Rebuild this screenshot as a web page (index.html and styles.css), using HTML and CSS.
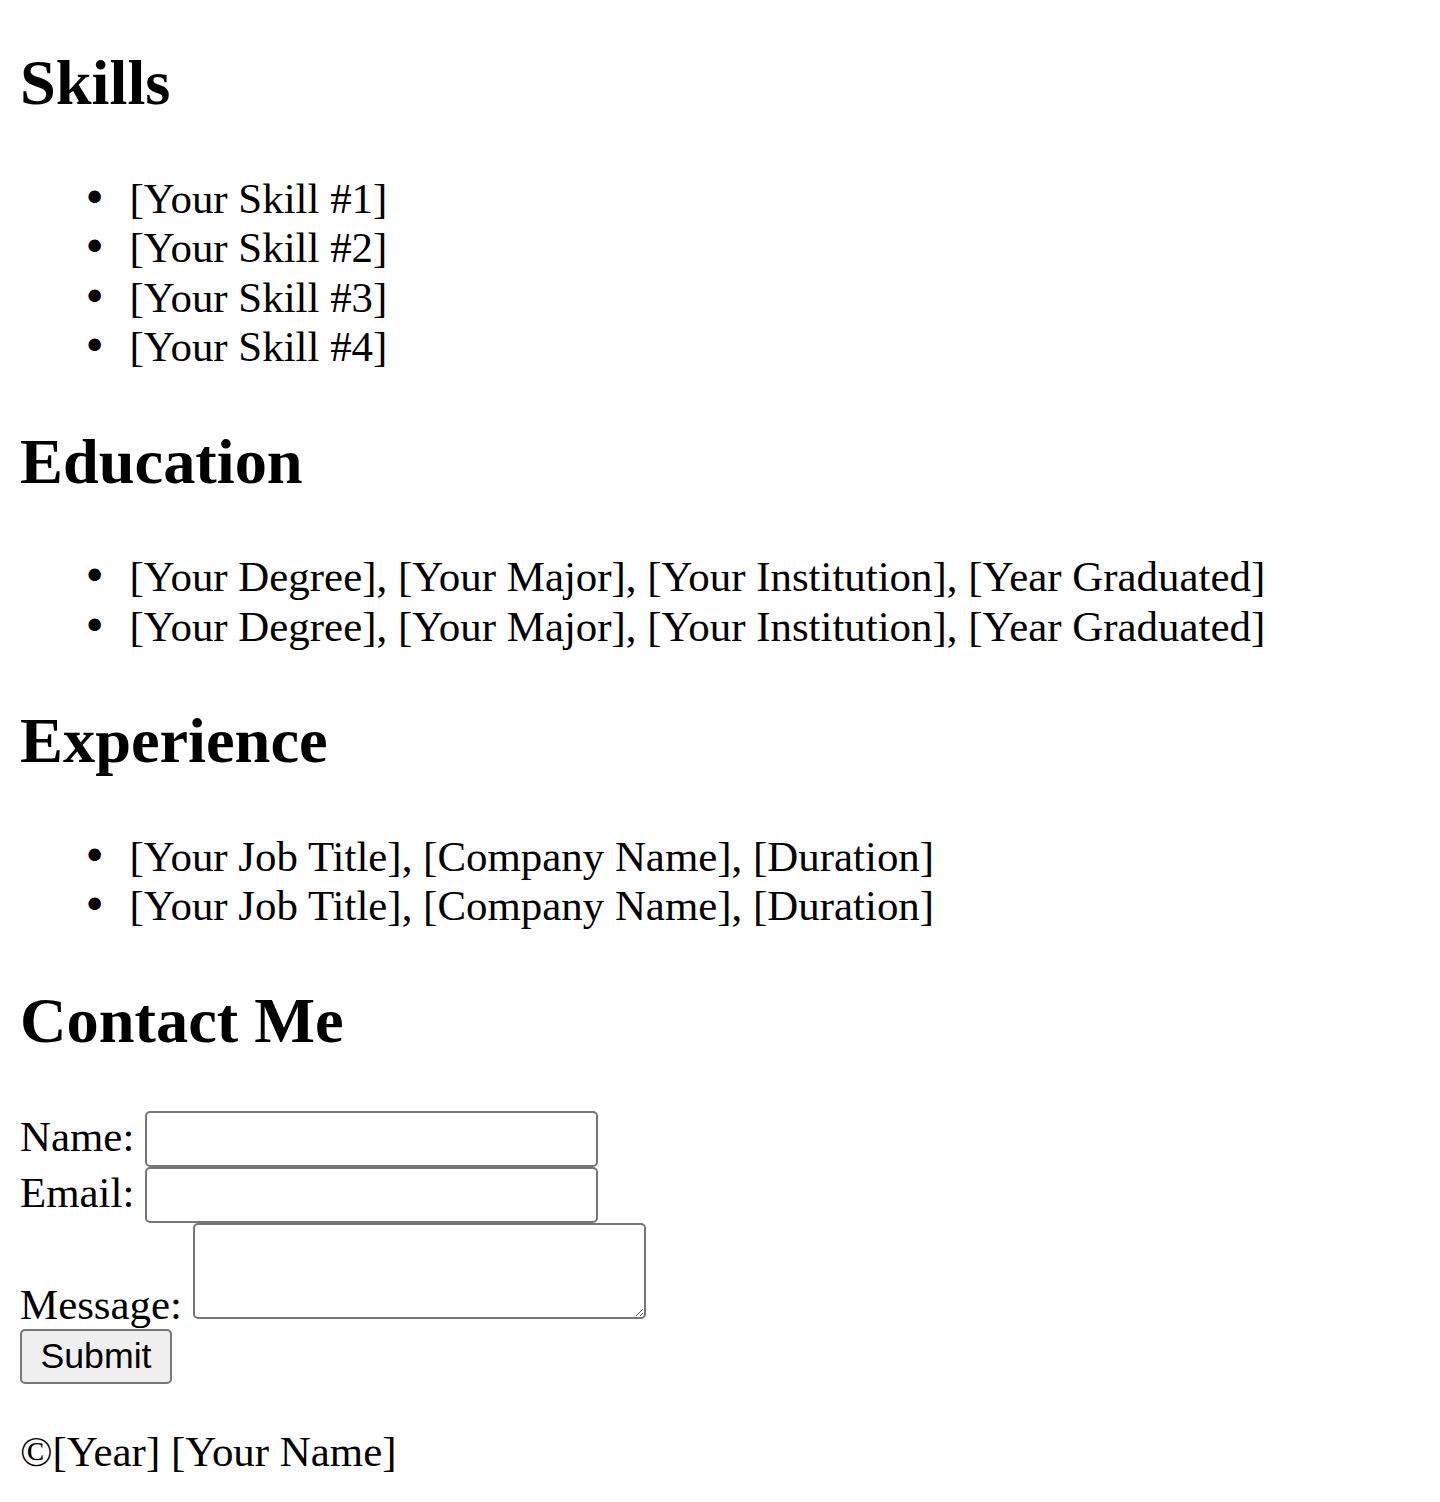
FILE: index.html
```html
<!DOCTYPE html>
<html lang="en">
<head>
<meta charset="utf-8">
<title>Resume</title>
<link rel="stylesheet" href="styles.css">
</head>
<body class="page">
<section class="section">
  <h2 class="heading heading--first">Skills</h2>
  <ul class="list">
    <li>[Your Skill #1]</li>
    <li>[Your Skill #2]</li>
    <li>[Your Skill #3]</li>
    <li>[Your Skill #4]</li>
  </ul>
</section>
<section class="section">
  <h2 class="heading">Education</h2>
  <ul class="list">
    <li>[Your Degree], [Your Major], [Your Institution], [Year Graduated]</li>
    <li>[Your Degree], [Your Major], [Your Institution], [Year Graduated]</li>
  </ul>
</section>
<section class="section">
  <h2 class="heading">Experience</h2>
  <ul class="list">
    <li>[Your Job Title], [Company Name], [Duration]</li>
    <li>[Your Job Title], [Company Name], [Duration]</li>
  </ul>
</section>
<section class="section">
  <h2 class="heading">Contact Me</h2>
  <form class="contact-form">
    <label for="name">Name:</label> <input class="field" type="text" id="name" name="name"><br>
    <label for="email">Email:</label> <input class="field" type="email" id="email" name="email"><br>
    <label for="message">Message:</label> <textarea class="field-area" id="message" name="message"></textarea><br>
    <button class="submit" type="submit">Submit</button>
  </form>
</section>
<footer class="footer">
  <p class="copyright">&copy;[Year] [Your Name]</p>
</footer>
</body>
</html>
```
FILE: styles.css
```css
html {
  background: #ffffff;
}

.page {
  margin: 20px;
  font-family: "Liberation Serif", "Times New Roman", serif;
  font-size: 42.9px;
  color: #000000;
}

.heading {
  font-size: 64.4px;
  font-weight: bold;
  margin: 53.4px 0;
}

.heading--first {
  margin-top: 26.4px;
}

.list {
  margin: 42.9px 0;
  padding-left: 109.5px;
}

.list li {
  line-height: 49.4px;
}

.list li::marker {
  content: "\2022\00a0\2009";
  font-family: "DejaVu Sans", sans-serif;
  font-size: 42.9px;
}

.contact-form {
  margin: 0;
}

.field {
  box-sizing: border-box;
  width: 453px;
  height: 56px;
  margin: 0;
  padding: 2.7px 5.4px;
  border: 2.7px solid #767676;
  border-radius: 5px;
  font-family: "Liberation Sans", Arial, sans-serif;
  font-size: 35.7px;
  background: #ffffff;
}

.field-area {
  box-sizing: border-box;
  width: 453px;
  height: 96px;
  margin: 0;
  padding: 2.7px 5.4px;
  border: 2.7px solid #767676;
  border-radius: 5px;
  font-family: "Liberation Mono", monospace;
  font-size: 35.7px;
  background: #ffffff;
  resize: both;
}

.submit {
  box-sizing: border-box;
  width: 152px;
  height: 55px;
  margin: 0;
  padding: 0;
  border: 2.7px solid #767676;
  border-radius: 5px;
  background: #efefef;
  color: #000000;
  font-family: "Liberation Sans", Arial, sans-serif;
  font-size: 35.7px;
}

.copyright {
  margin: 42.9px 0;
}
```
